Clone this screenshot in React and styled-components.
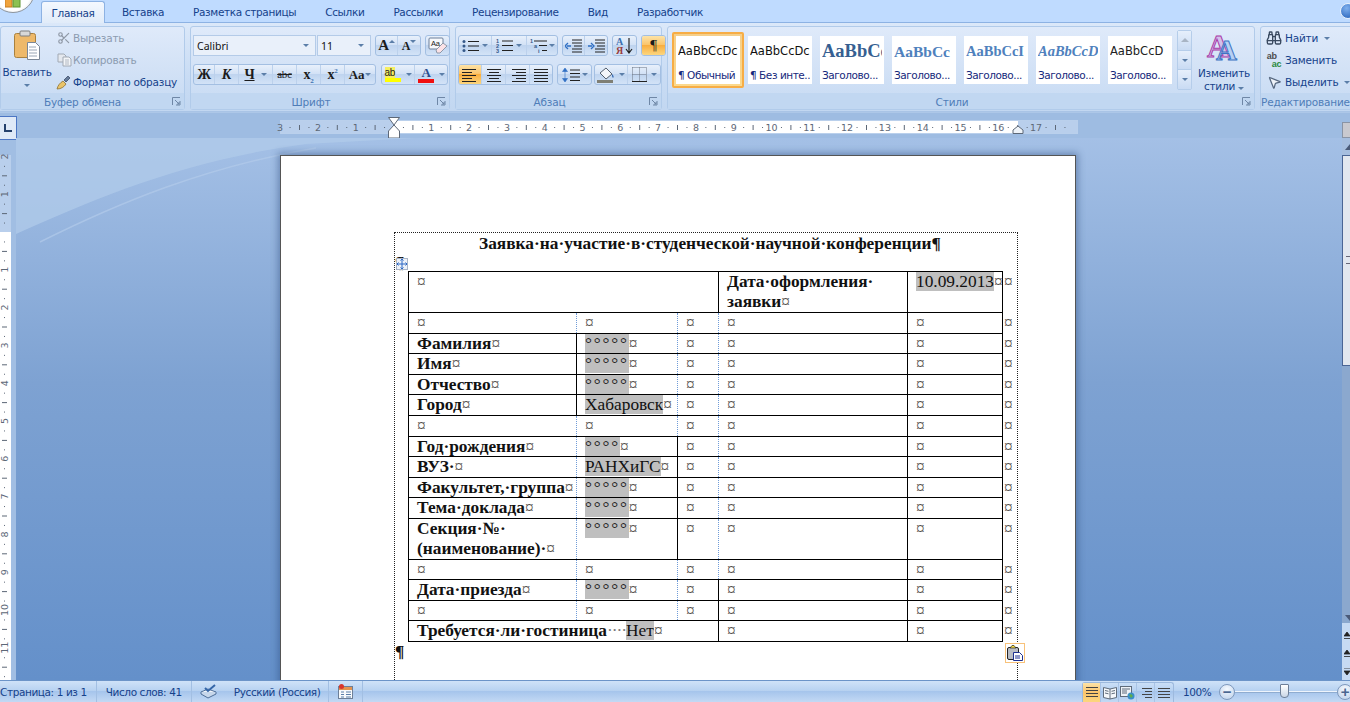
import React from 'react';
import styled, { createGlobalStyle } from 'styled-components';
import { Scissors, Binoculars, MousePointer2 } from 'lucide-react';

const GlobalStyle = createGlobalStyle`
  html, body { margin: 0; padding: 0; overflow: hidden; }
  * { box-sizing: border-box; }
`;

const uiFont = `"DejaVu Sans", "Noto Sans", sans-serif`;
const docFont = `"Liberation Serif", "Times New Roman", serif`;
const navy = '#15428b';

const Window = styled.div`
  position: relative;
  width: 1350px;
  height: 702px;
  display: flex;
  flex-direction: column;
  overflow: hidden;
  font-family: ${uiFont};
  font-size: 10.5px;
  letter-spacing: -0.2px;
  color: ${navy};
`;

/* ---------- tabs ---------- */
const TabStrip = styled.div`
  height: 23px;
  flex: none;
  display: flex;
  gap: 5px;
  padding-left: 41px;
  background: #bfdbff;
  border-bottom: 1px solid #8db2e3;
  letter-spacing: -0.35px;
`;
const Tab = styled.div`
  padding: 0 12px;
  height: ${p => (p.$active ? '23px' : '22px')};
  margin-top: 1px;
  line-height: 22px;
  white-space: nowrap;
  ${p => p.$active && `
    width: 64px;
    text-align: center;
    background: linear-gradient(#f4f8fe, #e0ebf9);
    border: 1px solid #8db2e3;
    border-bottom: 0;
    border-radius: 3px 3px 0 0;
    padding: 0;
  `}
`;
const OfficeButton = styled.div`
  position: absolute;
  left: -9px;
  top: -31px;
  width: 44px;
  height: 44px;
  border-radius: 50%;
  background: radial-gradient(circle at 50% 55%, #fff 55%, #cfd6de 80%, #a6adb5 100%);
  border: 1px solid #8e959d;
  overflow: hidden;
`;
const OfficeMark = styled.svg`
  position: absolute;
  left: 13px;
  top: 28px;
`;
const HelpBadge = styled.div`
  position: absolute;
  right: -6px;
  top: 3px;
  width: 16px;
  height: 16px;
  border-radius: 50%;
  background: radial-gradient(circle at 40% 30%, #7fb0ee, #1d5bb5);
  border: 1px solid #e8f0fa;
`;

/* ---------- ribbon ---------- */
const Ribbon = styled.div`
  height: 89px;
  flex: none;
  display: flex;
  gap: 5px;
  padding: 3px 0 1px;
  background: linear-gradient(#dbe8f9, #c9dcf4 60%, #c2d7f1);
  border-bottom: 1px solid #a9c4e6;
`;
const Group = styled.div`
  position: relative;
  flex: none;
  width: ${p => p.$w}px;
  display: flex;
  flex-direction: column;
  border: 1px solid #b1cbea;
  border-radius: 3px;
  background: linear-gradient(#dfeafa, #d3e2f6 50%, #c6daf3);
`;
const GroupBody = styled.div`
  flex: 1;
  min-height: 0;
  display: flex;
  padding: ${p => p.$pad || '0'};
`;
const GroupCaption = styled.div`
  height: 16px;
  flex: none;
  background: #c1d7f1;
  color: #4f7db8;
  text-align: ${p => p.$align || 'center'};
  line-height: 18px;
  white-space: nowrap;
  padding-right: ${p => p.$shift || 0}px;
`;
const Launcher = styled.svg`
  position: absolute;
  right: 3px;
  bottom: 3px;
`;
const Stack = styled.div`
  display: flex;
  flex-direction: column;
  gap: ${p => p.$gap || 0}px;
  margin-left: ${p => p.$ml || 0}px;
`;
const Row = styled.div`
  display: flex;
  gap: ${p => p.$gap || 4}px;
  height: 21px;
`;
const BigButton = styled.div`
  width: ${p => p.$w}px;
  margin-left: ${p => p.$ml || 0}px;
  flex: none;
  display: flex;
  flex-direction: column;
  align-items: center;
  line-height: 13px;
  text-align: center;
`;
const PasteSlot = styled.div`
  width: 27px;
  height: 31px;
  margin-top: 3px;
`;
const PasteLabel = styled.span`
  margin-top: 5px;
`;
const PasteCaret = styled.i`
  width: 0;
  height: 0;
  margin-top: 5px;
  border-left: 3px solid transparent;
  border-right: 3px solid transparent;
  border-top: 3px solid #5b7ea8;
`;
const SmallAction = styled.div`
  height: 22px;
  flex: none;
  display: flex;
  align-items: center;
  gap: ${p => p.$gap ?? 3}px;
  white-space: nowrap;
  color: ${p => (p.$off ? '#8c9bb0' : navy)};
`;
const IconSlot = styled.span`
  width: 16px;
  height: 16px;
  flex: none;
  display: inline-flex;
  align-items: center;
  justify-content: center;
`;
const Caret = styled.i`
  display: inline-block;
  flex: none;
  width: 0;
  height: 0;
  margin-left: ${p => p.$ml ?? 3}px;
  margin-bottom: ${p => p.$lift || 0}px;
  border-left: 3px solid transparent;
  border-right: 3px solid transparent;
  border-top: 3px solid #5b7ea8;
  ${p => p.$up && 'transform: rotate(180deg);'}
`;
const Combo = styled.div`
  width: ${p => p.$w}px;
  height: 21px;
  flex: none;
  display: flex;
  align-items: center;
  justify-content: space-between;
  padding: 0 6px 0 3px;
  background: #e9f0fa;
  border: 1px solid #b4cbe8;
  color: #111;
  font-family: "Noto Sans", sans-serif;
  letter-spacing: 0;
`;
const ComboPair = styled.div`
  display: flex;
  gap: 1px;
`;
const ButtonSet = styled.div`
  display: flex;
  height: 21px;
  flex: none;
  margin-left: ${p => p.$ml || 0}px;
  border: 1px solid #a3bfe2;
  border-radius: 3px;
  overflow: hidden;
  background: linear-gradient(#e8f0fb, #d3e2f6 45%, #bfd4ef 50%, #d3e3f7);
`;
const ToolButton = styled.div`
  width: ${p => p.$w}px;
  height: 100%;
  flex: none;
  display: flex;
  align-items: center;
  justify-content: center;
  color: #222;
  border-right: 1px solid #bcd1ec;
  &:last-child { border-right: 0; }
  ${p => p.$on && 'background: linear-gradient(#fde3a7, #fbc56c 45%, #f9ae3f 50%, #fcd67e);'}
`;
const Glyph = styled.span`
  font-family: ${docFont};
  font-size: ${p => p.$size || 14}px;
  font-weight: ${p => p.$weight || 700};
  font-style: ${p => (p.$italic ? 'italic' : 'normal')};
  text-decoration: ${p => p.$deco || 'none'};
  color: ${p => p.$color || '#1c1c1c'};
  line-height: 1;
  sub, sup { font-size: 7px; line-height: 0; color: #3b6fb0; }
`;
const ColorBar = styled.span`
  display: flex;
  flex-direction: column;
  align-items: center;
  width: 17px;
  line-height: 11px;
  &::after {
    content: '';
    width: 16px;
    height: 4px;
    background: ${p => p.$color};
  }
`;
const MarkerText = styled.span`
  font-family: "Liberation Sans", sans-serif;
  font-size: 10px;
  color: #222;
  background: #f5ee60;
  line-height: 11px;
  align-self: flex-start;
`;

/* styles gallery */
const Gallery = styled.div`
  display: flex;
  margin: 5px 0 0 4px;
`;
const StyleItem = styled.div`
  width: 72px;
  height: 56px;
  flex: none;
  padding: 2px;
  border: 2px solid ${p => (p.$on ? '#f7ad45' : 'transparent')};
  border-radius: 2px;
  ${p => p.$on && 'background: linear-gradient(#f5cf8a, #fbd98d);'}
`;
const StyleFace = styled.div`
  height: 100%;
  background: #fff;
  overflow: hidden;
  white-space: nowrap;
  color: #111;
  padding: 0 2px;
`;
const StyleSample = styled.div`
  height: 31px;
  line-height: 31px;
  font-family: ${p => (p.$serif ? docFont : uiFont)};
  font-size: ${p => p.$size}px;
  font-weight: ${p => (p.$bold ? 700 : 400)};
  font-style: ${p => (p.$italic ? 'italic' : 'normal')};
  color: ${p => p.$color || '#111'};
  letter-spacing: 0;
  overflow: hidden;
`;
const StyleName = styled.div`
  height: 16px;
  line-height: 16px;
  color: #15287b;
  letter-spacing: -0.45px;
  overflow: hidden;
`;
const GalleryScroll = styled.div`
  width: 15px;
  margin: 3px 0 0 1px;
  flex: none;
  display: flex;
  flex-direction: column;
  height: 60px;
  border: 1px solid #b5cdea;
  border-radius: 2px;
`;
const ScrollStep = styled.div`
  flex: 1;
  display: flex;
  align-items: center;
  justify-content: center;
  background: linear-gradient(#e6effb, #c9dbf3);
  border-bottom: 1px solid #b5cdea;
  &:last-child { border-bottom: 0; }
`;
const UpCaret = styled.i`
  width: 0;
  height: 0;
  border-left: 4px solid transparent;
  border-right: 4px solid transparent;
  border-bottom: 4px solid #a8b4c4;
`;
const Letters = styled.div`
  position: relative;
  width: 34px;
  height: 32px;
  margin: 3px 0 6px;
`;
const BigLetter = styled.span`
  position: absolute;
  left: ${p => p.$x}px;
  top: ${p => p.$y}px;
  font-family: ${docFont};
  font-size: ${p => p.$size}px;
  font-weight: 700;
  line-height: 1;
  color: ${p => p.$fill};
  -webkit-text-stroke: 1px ${p => p.$stroke};
`;
const ReplaceMark = styled.span`
  font-family: "Liberation Sans", sans-serif;
  font-size: 9px;
  font-weight: 700;
  line-height: 8px;
  color: #4c4c4c;
  display: block;
  b { color: #2b8a3e; display: block; padding-left: 5px; }
`;

/* ---------- rulers ---------- */
const RulerRow = styled.div`
  position: relative;
  height: 26px;
  flex: none;
  display: flex;
  background: #9ebce2;
  border-top: 1px solid #adc7e8;
`;
const CornerTab = styled.div`
  width: 17px;
  height: 24px;
  margin-top: 3px;
  background: #dfe9f7;
  border: 1px solid #4c76c4;
  border-left: 0;
  display: flex;
  align-items: center;
  justify-content: center;
  &::after {
    content: '';
    width: 6px;
    height: 6px;
    border-left: 2px solid #24406c;
    border-bottom: 2px solid #24406c;
  }
`;
const HRuler = styled.div`
  position: relative;
  width: 798px;
  height: 14px;
  margin: 7px 0 0 263px;
  background: linear-gradient(to right, #b9cfec 113px, #fff 113px, #fff 737px, #b9cfec 737px);
  border: 1px solid #bad0ec;
`;
const RulerDrawing = styled.svg`
  display: block;
  overflow: visible;
  font-family: ${uiFont};
  font-size: 9.5px;
  letter-spacing: 0;
`;
const Marker = styled.svg`
  position: absolute;
  left: ${p => p.$x}px;
  top: ${p => p.$y}px;
`;
const ViewRuler = styled.div`
  width: 8px;
  height: 16px;
  margin: 9px 0 0 auto;
  background: #c9c9cf;
  border: 1px solid #8a94a5;
  border-right: 0;
`;

/* ---------- workspace ---------- */
const Workspace = styled.div`
  flex: 1;
  min-height: 0;
  display: flex;
`;
const VRulerColumn = styled.div`
  width: 16px;
  flex: none;
  padding-top: 17px;
  background: #a1bee3;
`;
const VRuler = styled.div`
  width: 11px;
  height: 525px;
  background: linear-gradient(#b9cfec 77px, #fff 77px);
`;
const Canvas = styled.div`
  position: relative;
  flex: 1;
  min-width: 0;
  overflow: hidden;
  padding: 17px 0 0 264px;
  background: linear-gradient(#a4c0e6 0, #7ea2d2 45%, #6490ca 100%);
`;
const Swoosh = styled.svg`
  position: absolute;
  left: 0;
  top: 0;
`;
const Page = styled.div`
  position: relative;
  width: 796px;
  height: 560px;
  padding: 77px 0 0 114px;
  background: #fff;
  border: 1px solid #555;
  box-shadow: 0 0 7px 2px rgba(40, 70, 120, 0.45);
`;
const TextArea = styled.div`
  position: relative;
  width: 624px;
  height: 460px;
  border: 1px dotted #222;
  border-bottom: 0;
  margin: -1px 0 0 -1px;
  font-family: ${docFont};
  font-size: 17.33px;
  line-height: 20px;
  letter-spacing: 0;
  color: #111;
`;
const Title = styled.div`
  height: 38px;
  padding: 1px 0 0 8px;
  text-align: center;
  font-weight: 700;
  white-space: nowrap;
`;
const HiddenPilcrow = styled.span`
  position: absolute;
  left: 0;
  top: 20px;
  font-weight: 700;
`;
const MoveHandle = styled.div`
  position: absolute;
  left: 1px;
  top: 25px;
  width: 12px;
  height: 12px;
  background: #eef2f8;
  border: 1px solid #a9b4c6;
  display: flex;
  align-items: center;
  justify-content: center;
`;
const Form = styled.table`
  table-layout: fixed;
  width: 608px;
  margin-left: 13px;
  border-collapse: collapse;
`;
const FormRow = styled.tr`
  height: ${p => p.$h}px;
`;
const Cell = styled.td`
  padding: 0 0 0 8px;
  vertical-align: top;
  white-space: nowrap;
  line-height: ${p => (p.$tall ? 20 : 19)}px;
  border-top: 1px solid #000;
  border-bottom: 1px solid #000;
  border-left: 1px ${p => p.$line || 'solid'} ${p => (p.$line === 'dotted' ? '#6f9bd8' : '#000')};
`;
const EndCell = styled.td`
  padding: 0 0 0 1px;
  vertical-align: top;
  border-left: 1px solid #000;
  line-height: 19px;
`;
const Label = styled.span`
  font-weight: 700;
`;
const Mark = styled.span`
  font-weight: 400;
  color: #56524e;
`;
const Shade = styled.span`
  display: inline-block;
  height: 19px;
  line-height: 19px;
  vertical-align: top;
  background: #bfbfbf;
`;
const Dots = styled.span`
  letter-spacing: ${p => p.$space}px;
  color: #222;
`;
const Leader = styled.span`
  color: #777;
  letter-spacing: -1px;
`;
const Pilcrow = styled.div`
  font-weight: 700;
  height: 20px;
`;
const PasteTag = styled.div`
  position: absolute;
  left: 610px;
  top: 410px;
  width: 20px;
  height: 20px;
  background: #fff;
  border: 1px solid #f8c27a;
  display: flex;
  align-items: center;
  justify-content: center;
`;

/* scroll column */
const ScrollColumn = styled.div`
  width: 8px;
  flex: none;
  display: flex;
  flex-direction: column;
  background: #8ba8ce;
`;
const ScrollArrow = styled.div`
  height: 17px;
  flex: none;
  padding: 6px 0 0 3px;
  background: #a6bedf;
  &::after {
    content: '';
    display: block;
    width: 0;
    height: 0;
    border-left: 5px solid transparent;
    border-right: 5px solid transparent;
    border-bottom: 6px solid #4a5a78;
  }
`;
const Thumb = styled.div`
  height: 211px;
  flex: none;
  padding-top: 100px;
  background: #e2e7ef;
  border: 1px solid #4a6595;
  border-right: 0;
  &::after {
    content: '';
    display: block;
    height: 6px;
    margin-left: 3px;
    border-top: 1px solid #667;
    border-bottom: 1px solid #667;
  }
`;
const ScrollTrack = styled.div`
  flex: 1;
  display: flex;
  align-items: flex-end;
  padding: 0 0 2px 3px;
  &::after {
    content: '';
    width: 0;
    height: 0;
    border-left: 5px solid transparent;
    border-right: 5px solid transparent;
    border-top: 6px solid #4a5a78;
  }
`;
const ScrollNav = styled.div`
  height: 57px;
  flex: none;
  background: #c6daf3;
  display: flex;
  flex-direction: column;
  justify-content: space-around;
  padding: 4px 0 0 2px;
`;

/* ---------- status bar ---------- */
const StatusBar = styled.div`
  height: 22px;
  flex: none;
  display: flex;
  align-items: center;
  background: linear-gradient(#cfe2f8, #b8d2f1 45%, #a6c5ec 50%, #c3d9f4);
  border-top: 1px solid #6c94c8;
  color: #15428b;
  white-space: nowrap;
  letter-spacing: -0.4px;
`;
const StatusItem = styled.div`
  height: 100%;
  display: flex;
  align-items: center;
  padding: ${p => p.$pad || '0 9px'};
  border-right: 1px solid #a2bfe3;
`;
const LanguageName = styled.span`
  margin-left: 16px;
`;
const ViewSet = styled.div`
  height: 20px;
  margin: 1px 0 0 auto;
  display: flex;
  border: 1px solid #9db9dd;
  border-bottom: 0;
  border-radius: 3px 3px 0 0;
`;
const ViewButton = styled.div`
  width: 18px;
  display: flex;
  align-items: center;
  justify-content: center;
  border-right: 1px solid #a9c4e6;
  &:last-child { border-right: 0; }
  ${p => p.$on && 'background: linear-gradient(#fde3a7, #fbc56c 50%, #fcd67e);'}
`;
const ZoomValue = styled.div`
  width: 36px;
  margin-left: 9px;
`;
const ZoomRound = styled.div`
  width: 16px;
  height: 16px;
  flex: none;
  margin-right: ${p => p.$mr || 0}px;
  border-radius: 50%;
  border: 1px solid #7f99bd;
  background: radial-gradient(circle at 50% 30%, #f5f9fe, #bcd0ea);
  display: flex;
  align-items: center;
  justify-content: center;
  font-family: "Liberation Sans", sans-serif;
  font-size: 15px;
  font-weight: 700;
  line-height: 1;
  color: #4a6690;
`;
const ZoomTrack = styled.div`
  position: relative;
  width: 102px;
  height: 2px;
  background: #eef4fc;
  border-bottom: 1px solid #8facd0;
`;
const ZoomThumb = styled.div`
  position: absolute;
  left: 45px;
  top: -7px;
  width: 9px;
  height: 14px;
  background: linear-gradient(#fff, #c9d6e6);
  border: 1px solid #6d7f98;
  border-radius: 1px 1px 4px 4px;
`;

/* ---------- drawings ---------- */
const Lines = ({ rows, w = 16, h = 14, color = '#222' }) => (
  <svg width={w} height={h} viewBox={`0 0 ${w} ${h}`}>
    {rows.map(([a, b, y], i) => (
      <rect key={i} x={a} y={y} width={b - a} height="1" fill={color} />
    ))}
  </svg>
);

const PasteIcon = () => (
  <svg width="27" height="31" viewBox="0 0 27 31">
    <rect x="0.5" y="3.5" width="21" height="24" rx="2" fill="#eeb96a" stroke="#a9813f" />
    <rect x="6" y="1" width="10" height="5" rx="1" fill="#d8d8d8" stroke="#7e7e7e" />
    <path d="M13.5 12.5h8l4 4v13h-12z" fill="#fff" stroke="#7a8797" />
    <path d="M15 17h7M15 20h8M15 23h8M15 26h8" stroke="#9aa6b5" />
  </svg>
);
const CopyIcon = () => (
  <svg width="15" height="14" viewBox="0 0 15 14">
    <path d="M1 1h6l2 2v6H1z" fill="#e4e8ee" stroke="#a1a9b4" />
    <path d="M6 4h6l2 2v7H6z" fill="#f2f4f7" stroke="#a1a9b4" />
    <path d="M8 7h4M8 9h4M8 11h4" stroke="#b1b8c2" />
  </svg>
);
const BrushIcon = () => (
  <svg width="16" height="16" viewBox="0 0 16 16">
    <path d="M1 15c1-4 3-6 6-8l3 3c-2 3-5 5-9 5z" fill="#e9c46a" stroke="#8d7134" strokeWidth=".8" />
    <path d="M8 6l4-4 2 2-4 4z" fill="#667b9a" stroke="#3f4f68" strokeWidth=".8" />
  </svg>
);
const ClearIcon = () => (
  <svg width="20" height="17" viewBox="0 0 20 17">
    <rect x="1" y="1" width="14" height="11" rx="1" fill="#f7f9fc" stroke="#6d7f98" />
    <text x="3" y="9" fontFamily="Liberation Sans" fontSize="7.5" fill="#222">Aa</text>
    <path d="M8 13l7-7 4 3-7 7H9z" fill="#fbe2e6" stroke="#8d98a8" />
  </svg>
);
const BulletIcon = () => (
  <svg width="18" height="14" viewBox="0 0 18 14">
    <g fill="#35598a"><circle cx="2" cy="2.5" r="1.5" /><circle cx="2" cy="7" r="1.5" /><circle cx="2" cy="11.5" r="1.5" /></g>
    <path d="M6 2.5h11M6 7h11M6 11.5h11" stroke="#222" />
  </svg>
);
const NumberIcon = () => (
  <svg width="18" height="15" viewBox="0 0 18 15">
    <g fontFamily="Liberation Sans" fontSize="5.5" fontWeight="700" fill="#35598a">
      <text x="0" y="5">1</text><text x="0" y="10">2</text><text x="0" y="15">3</text>
    </g>
    <path d="M6 3h11M6 7.5h11M6 12.5h11" stroke="#222" />
  </svg>
);
const MultiIcon = () => (
  <svg width="18" height="15" viewBox="0 0 18 15">
    <g fontFamily="Liberation Sans" fontSize="5.5" fontWeight="700" fill="#35598a">
      <text x="0" y="5">1</text><text x="4" y="10">a</text><text x="8" y="15">i</text>
    </g>
    <path d="M4 3h13M9 7.5h8M12 12.5h5" stroke="#222" />
  </svg>
);
const IndentIcon = ({ flip }) => (
  <svg width="17" height="14" viewBox="0 0 17 14">
    <path d="M7 1h10M7 4h10M9 7h8M7 10h10M7 13h10" stroke="#222" />
    <path d={flip ? 'M0 7h4M3 4l3 3-3 3' : 'M6 7H2M3 4L0 7l3 3'} stroke="#2f6fc4" strokeWidth="1.3" fill="none" />
  </svg>
);
const SortIcon = () => (
  <svg width="18" height="17" viewBox="0 0 18 17">
    <text x="0" y="8" fontFamily="Liberation Serif" fontSize="10" fontWeight="700" fill="#3b6fb0">A</text>
    <text x="0" y="16.5" fontFamily="Liberation Serif" fontSize="10" fontWeight="700" fill="#9b3d3d">Я</text>
    <path d="M13 1v14M10 12l3 4 3-4" stroke="#222" fill="none" strokeWidth="1.2" />
  </svg>
);
const SpacingIcon = () => (
  <svg width="18" height="16" viewBox="0 0 18 16">
    <path d="M3 1L0.5 4.5h5zM3 15L0.5 11.5h5zM3 4v8" fill="#2f6fc4" stroke="#2f6fc4" strokeWidth=".6" />
    <path d="M8 3h10M8 6.5h10M8 10h10M8 13.5h10" stroke="#222" />
  </svg>
);
const BucketIcon = () => (
  <svg width="18" height="17" viewBox="0 0 18 17">
    <path d="M3 7l6-5 6 6-6 5z" fill="#f4f6fa" stroke="#54606f" />
    <path d="M15 8c2 2 2 3 1 4-1-1-1-2-1-4z" fill="#3a6db5" />
    <rect x="0" y="14" width="16" height="3" fill="#7f7f74" />
  </svg>
);
const BorderIcon = () => (
  <svg width="15" height="15" viewBox="0 0 15 15">
    <path d="M.5.5h14v14M.5.5v14M7.5 .5v14M.5 7.5h14" stroke="#6a7380" strokeDasharray="1 1" fill="none" />
    <path d="M0 14.5h15" stroke="#222" />
  </svg>
);
const MoveIcon = () => (
  <svg width="10" height="10" viewBox="0 0 10 10">
    <path d="M5 0v10M0 5h10M3.5 1.5L5 0l1.500 1.500M3.500 8.500L5 10l1.500-1.500M1.500 3.500L0 5l1.500 1.500M8.500 3.500L10 5 8.500 6.500" stroke="#2b67c4" fill="none" />
  </svg>
);
const PasteTagIcon = () => (
  <svg width="16" height="16" viewBox="0 0 16 16">
    <rect x="0.5" y="2.500" width="11" height="12" rx="1.500" fill="#b9bcc3" stroke="#222" />
    <path d="M3 3l2-2.500h2L9 3z" fill="#f6dc3f" stroke="#222" strokeWidth=".7" />
    <path d="M6.500 7.500h6l3 3v5h-9z" fill="#fff" stroke="#1d2f8f" />
    <path d="M8 11h5M8 13h5" stroke="#1d2f8f" />
  </svg>
);
const LaunchMark = () => (
  <Launcher width="9" height="9" viewBox="0 0 9 9">
    <path d="M.5 8V.5H8M8 4v4H4" stroke="#6f87a6" fill="none" />
    <path d="M3 3l4 4M5 7h2V5" stroke="#6f87a6" fill="none" />
  </Launcher>
);
const SpellIcon = () => (
  <svg width="18" height="15" viewBox="0 0 18 15">
    <path d="M1 8l7-3 8 3-8 4z" fill="#f2f6fb" stroke="#4f6f99" />
    <path d="M1 8v2l7 4 8-4V8" fill="#c7d7eb" stroke="#4f6f99" />
    <path d="M5 4l3 3 7-6" stroke="#3566a8" strokeWidth="2" fill="none" />
  </svg>
);
const MacroIcon = () => (
  <svg width="15" height="15" viewBox="0 0 15 15">
    <rect x="0.5" y="2.500" width="14" height="12" fill="#f8fafc" stroke="#6d7f98" />
    <rect x="1" y="3" width="13" height="3" fill="#e4934e" />
    <path d="M3 8h3M8 8h5M3 10.500h3M8 10.500h5M3 13h3M8 13h5" stroke="#5b7ea8" />
    <circle cx="3.500" cy="2.500" r="2.500" fill="#d8352c" />
  </svg>
);
const ReadIcon = () => (
  <svg width="14" height="14" viewBox="0 0 14 14">
    <path d="M.5 1.500L7 3l6.500-1.500v10L7 13 .5 11.500zM7 3v10" fill="#f4f7fb" stroke="#5f6b7a" />
    <path d="M2 4.500l3.500.8M2 7l3.500.8M8.500 5.300L12 4.500M8.500 7.800L12 7" stroke="#5f6b7a" />
  </svg>
);
const WebIcon = () => (
  <svg width="15" height="14" viewBox="0 0 15 14">
    <rect x="0.5" y="0.500" width="11" height="10" fill="#eef2f7" stroke="#5f6b7a" />
    <path d="M2 3h8M2 5h5M2 7h5" stroke="#5f6b7a" />
    <circle cx="11" cy="10" r="3.500" fill="#3a8fc8" />
    <path d="M9 9l2-1 2 2-2 2z" fill="#5fae4a" />
  </svg>
);
const PrevNextIcon = ({ down }) => (
  <svg width="6" height="7" viewBox="0 0 6 7">
    <path d={down ? 'M0 0h6M0 3h6L3 7z' : 'M3 0l3 4H0zM0 6.500h6'} stroke="#222" fill="#222" strokeWidth=".8" />
  </svg>
);

const HorizontalMarks = () => {
  const origin = 112.5;
  const cm = 37.8;
  const parts = [];
  for (let q = -12; q <= 71; q++) {
    const x = origin + (q * cm) / 4;
    if (q === 0) continue;
    if (q % 4 === 0) {
      parts.push(<text key={q} x={x} y="10" textAnchor="middle" fill="#5d6877">{Math.abs(q / 4)}</text>);
    } else if (q % 2 === 0) {
      parts.push(<rect key={q} x={x} y="4" width="1" height="5" fill="#5d6877" />);
    } else {
      parts.push(<rect key={q} x={x} y="6" width="1" height="1" fill="#5d6877" />);
    }
  }
  return <RulerDrawing width="796" height="12">{parts}</RulerDrawing>;
};

const VerticalMarks = () => {
  const origin = 77;
  const cm = 37.8;
  const parts = [];
  for (let q = -8; q <= 48; q++) {
    const y = origin + (q * cm) / 4;
    if (q === 0) continue;
    if (q % 4 === 0) {
      parts.push(
        <text key={q} transform={`translate(8 ${y}) rotate(-90)`} textAnchor="middle" fill="#5d6877">{Math.abs(q / 4)}</text>
      );
    } else if (q % 2 === 0) {
      parts.push(<rect key={q} x="2" y={y} width="5" height="1" fill="#5d6877" />);
    } else {
      parts.push(<rect key={q} x="4" y={y} width="1" height="1" fill="#5d6877" />);
    }
  }
  return <RulerDrawing width="11" height="525">{parts}</RulerDrawing>;
};

/* ---------- data ---------- */
const tabs = ['Главная', 'Вставка', 'Разметка страницы', 'Ссылки', 'Рассылки', 'Рецензирование', 'Вид', 'Разработчик'];

const galleryItems = [
  { sample: 'AaBbCcDc', name: '¶ Обычный', size: 11.5, on: true },
  { sample: 'AaBbCcDc', name: '¶ Без инте...', size: 11.5 },
  { sample: 'AaBbCc', name: 'Заголово...', size: 18.5, serif: true, bold: true, color: '#365f91' },
  { sample: 'AaBbCc', name: 'Заголово...', size: 15.5, serif: true, bold: true, color: '#4f81bd' },
  { sample: 'AaBbCcI', name: 'Заголово...', size: 14.5, serif: true, bold: true, color: '#4f81bd' },
  { sample: 'AaBbCcD', name: 'Заголово...', size: 14.5, serif: true, bold: true, italic: true, color: '#4f81bd' },
  { sample: 'AaBbCcD', name: 'Заголово...', size: 11.5, color: '#222' },
];

const d = 'dotted';
const s = 'solid';
const five = <Dots $space={1.8}>°°°°°</Dots>;
const four = <Dots $space={1.8}>°°°°</Dots>;

const formRows = [
  { h: 21, lines: [d, d, d] },
  { h: 20, label: 'Фамилия', value: five, lines: [s, d, d] },
  { h: 21, label: 'Имя', value: five, lines: [s, d, d] },
  { h: 20, label: 'Отчество', value: five, lines: [s, d, d] },
  { h: 21, label: 'Город', value: 'Хабаровск', lines: [s, d, d] },
  { h: 21, lines: [d, d, d] },
  { h: 20, label: 'Год·рождения', value: four, lines: [d, s, d] },
  { h: 21, label: 'ВУЗ·', value: 'РАНХиГС', lines: [d, s, d] },
  { h: 20, label: 'Факультет,·группа', value: five, lines: [d, s, d] },
  { h: 21, label: 'Тема·доклада', value: five, lines: [d, s, d] },
  { h: 41, label: <>Секция·№·<br />(наименование)·</>, value: five, lines: [d, s, d], tall: true },
  { h: 20, lines: [d, d, d] },
  { h: 21, label: 'Дата·приезда', value: five, lines: [d, d, s] },
  { h: 20, lines: [d, d, s] },
];

const End = () => <Mark>¤</Mark>;

const App = () => (
  <>
    <GlobalStyle />
    <Window>
      <TabStrip>
        {tabs.map((t, i) => <Tab key={t} $active={i === 0}>{t}</Tab>)}
      </TabStrip>
      <OfficeButton>
        <OfficeMark width="16" height="10" viewBox="0 0 16 10">
          <rect x="0" y="0" width="7" height="9" fill="#f0a33c" stroke="#c77d22" />
          <rect x="8" y="0" width="7" height="9" fill="#8cc152" stroke="#5f9430" />
        </OfficeMark>
      </OfficeButton>
      <HelpBadge />

      <Ribbon>
        <Group $w={185}>
          <GroupBody>
            <BigButton $w={52}>
              <PasteSlot><PasteIcon /></PasteSlot>
              <PasteLabel>Вставить</PasteLabel>
              <PasteCaret />
            </BigButton>
            <Stack $ml={3}>
              <SmallAction $off $gap={1}><IconSlot><Scissors size={14} color="#8f98a5" /></IconSlot>Вырезать</SmallAction>
              <SmallAction $off $gap={1}><IconSlot><CopyIcon /></IconSlot>Копировать</SmallAction>
              <SmallAction $gap={1}><IconSlot><BrushIcon /></IconSlot>Формат по образцу</SmallAction>
            </Stack>
          </GroupBody>
          <GroupCaption $shift={20}>Буфер обмена</GroupCaption>
          <LaunchMark />
        </Group>

        <Group $w={260}>
          <GroupBody $pad="8px 0 0 2px">
            <Stack $gap={8}>
              <Row>
                <ComboPair>
                  <Combo $w={123}>Calibri<Caret /></Combo>
                  <Combo $w={54}>11<Caret /></Combo>
                </ComboPair>
                <ButtonSet>
                  <ToolButton $w={22}><Glyph $size={15}>A</Glyph><Caret $ml={0} $up $lift={8} /></ToolButton>
                  <ToolButton $w={22}><Glyph $size={12}>A</Glyph><Caret $ml={0} $lift={8} /></ToolButton>
                </ButtonSet>
                <ButtonSet><ToolButton $w={23}><ClearIcon /></ToolButton></ButtonSet>
              </Row>
              <Row $gap={5}>
                <ButtonSet>
                  <ToolButton $w={21}><Glyph>Ж</Glyph></ToolButton>
                  <ToolButton $w={24}><Glyph $italic>К</Glyph></ToolButton>
                  <ToolButton $w={34}><Glyph $deco="underline">Ч</Glyph><Caret $ml={6} /></ToolButton>
                  <ToolButton $w={24}><Glyph $size={11} $weight={400} $deco="line-through">abc</Glyph></ToolButton>
                  <ToolButton $w={24}><Glyph>x<sub>2</sub></Glyph></ToolButton>
                  <ToolButton $w={24}><Glyph>x<sup>2</sup></Glyph></ToolButton>
                  <ToolButton $w={30}><Glyph $size={13}>Aa</Glyph><Caret $ml={1} /></ToolButton>
                </ButtonSet>
                <ButtonSet>
                  <ToolButton $w={33}><ColorBar $color="#ffff00"><MarkerText>ab</MarkerText></ColorBar><Caret $ml={4} /></ToolButton>
                  <ToolButton $w={32}><ColorBar $color="#f01010"><Glyph $size={13} $color="#2a4d8f">A</Glyph></ColorBar><Caret $ml={4} /></ToolButton>
                </ButtonSet>
              </Row>
            </Stack>
          </GroupBody>
          <GroupCaption $shift={18}>Шрифт</GroupCaption>
          <LaunchMark />
        </Group>

        <Group $w={207}>
          <GroupBody $pad="8px 0 0 2px">
            <Stack $gap={8}>
              <Row>
                <ButtonSet>
                  <ToolButton $w={33}><BulletIcon /><Caret $ml={2} /></ToolButton>
                  <ToolButton $w={35}><NumberIcon /><Caret $ml={2} /></ToolButton>
                  <ToolButton $w={30}><MultiIcon /><Caret $ml={1} /></ToolButton>
                </ButtonSet>
                <ButtonSet>
                  <ToolButton $w={22}><IndentIcon /></ToolButton>
                  <ToolButton $w={22}><IndentIcon flip /></ToolButton>
                </ButtonSet>
                <ButtonSet><ToolButton $w={23}><SortIcon /></ToolButton></ButtonSet>
                <ButtonSet><ToolButton $w={23} $on><Glyph $size={15} $weight={400}>¶</Glyph></ToolButton></ButtonSet>
              </Row>
              <Row>
                <ButtonSet>
                  <ToolButton $w={23} $on><Lines rows={[[0, 14, 1], [0, 10, 4], [0, 14, 7], [0, 10, 10], [0, 14, 13]]} /></ToolButton>
                  <ToolButton $w={24}><Lines rows={[[1, 15, 1], [3, 13, 4], [1, 15, 7], [3, 13, 10], [1, 15, 13]]} /></ToolButton>
                  <ToolButton $w={24}><Lines rows={[[2, 16, 1], [6, 16, 4], [2, 16, 7], [6, 16, 10], [2, 16, 13]]} /></ToolButton>
                  <ToolButton $w={22}><Lines rows={[[1, 15, 1], [1, 15, 4], [1, 15, 7], [1, 15, 10], [1, 15, 13]]} /></ToolButton>
                </ButtonSet>
                <ButtonSet><ToolButton $w={33}><SpacingIcon /><Caret $ml={2} /></ToolButton></ButtonSet>
                <ButtonSet $ml={-2}>
                  <ToolButton $w={33}><BucketIcon /><Caret $ml={4} /></ToolButton>
                  <ToolButton $w={32}><BorderIcon /><Caret $ml={4} /></ToolButton>
                </ButtonSet>
              </Row>
            </Stack>
          </GroupBody>
          <GroupCaption $shift={18}>Абзац</GroupCaption>
          <LaunchMark />
        </Group>

        <Group $w={588}>
          <GroupBody>
            <Gallery>
              {galleryItems.map((g, i) => (
                <StyleItem key={i} $on={g.on}>
                  <StyleFace>
                    <StyleSample $size={g.size} $serif={g.serif} $bold={g.bold} $italic={g.italic} $color={g.color}>{g.sample}</StyleSample>
                    <StyleName>{g.name}</StyleName>
                  </StyleFace>
                </StyleItem>
              ))}
            </Gallery>
            <GalleryScroll>
              <ScrollStep><UpCaret /></ScrollStep>
              <ScrollStep><Caret $ml={0} /></ScrollStep>
              <ScrollStep><Caret $ml={0} /></ScrollStep>
            </GalleryScroll>
            <BigButton $w={58} $ml={3}>
              <Letters>
                <BigLetter $x={0} $y={0} $size={32} $fill="rgba(200,120,210,.35)" $stroke="#a83aa8">A</BigLetter>
                <BigLetter $x={9} $y={6} $size={29} $fill="rgba(150,190,240,.5)" $stroke="#3e74c4">A</BigLetter>
              </Letters>
              <span>Изменить</span>
              <span>стили<Caret /></span>
            </BigButton>
          </GroupBody>
          <GroupCaption $shift={18}>Стили</GroupCaption>
          <LaunchMark />
        </Group>

        <Group $w={100}>
          <GroupBody $pad="0 0 0 5px">
            <Stack>
              <SmallAction><IconSlot><Binoculars size={16} color="#3a4a60" /></IconSlot>Найти<Caret /></SmallAction>
              <SmallAction><IconSlot><ReplaceMark>ab<b>ac</b></ReplaceMark></IconSlot>Заменить</SmallAction>
              <SmallAction><IconSlot><MousePointer2 size={15} color="#55677f" fill="#eef3f9" /></IconSlot>Выделить<Caret /></SmallAction>
            </Stack>
          </GroupBody>
          <GroupCaption $align="left">Редактирование</GroupCaption>
        </Group>
      </Ribbon>

      <RulerRow>
        <CornerTab />
        <HRuler>
          <HorizontalMarks />
          <Marker $x={107} $y={-4} width="12" height="22" viewBox="0 0 12 22">
            <path d="M.5.5h11L6 8l5.500 6v7H.5v-7L6 8z" fill="#fff" stroke="#5d6877" />
          </Marker>
          <Marker $x={731} $y={4} width="12" height="9" viewBox="0 0 12 9">
            <path d="M1 8.500V5l5-4 5 4v3.500z" fill="#eef3f9" stroke="#5d6877" />
          </Marker>
        </HRuler>
        <ViewRuler />
      </RulerRow>

      <Workspace>
        <VRulerColumn>
          <VRuler><VerticalMarks /></VRuler>
        </VRulerColumn>
        <Canvas>
          <Swoosh width="400" height="110" viewBox="0 0 400 110">
            <path d="M0 96C80 60 170 22 290 6L400 0H0z" fill="#b0cbea" opacity=".75" />
            <path d="M24 104C100 66 190 28 300 10" stroke="#b2cbea" strokeWidth="1.500" fill="none" opacity=".7" />
          </Swoosh>
          <Page>
            <TextArea>
              <Title>Заявка·на·участие·в·студенческой·научной·конференции¶</Title>
              <HiddenPilcrow>¶</HiddenPilcrow>
              <MoveHandle><MoveIcon /></MoveHandle>
              <Form>
                <colgroup>
                  <col width="168" />
                  <col width="101" />
                  <col width="41" />
                  <col width="189" />
                  <col width="95" />
                  <col width="14" />
                </colgroup>
                <tbody>
                  <FormRow $h={41}>
                    <Cell colSpan={3}><End /></Cell>
                    <Cell $tall><Label>Дата·оформления·<br />заявки</Label><End /></Cell>
                    <Cell><Shade>10.09.2013</Shade><End /></Cell>
                    <EndCell><End /></EndCell>
                  </FormRow>
                  {formRows.map((r, i) => (
                    <FormRow key={i} $h={r.h}>
                      <Cell $tall={r.tall}>{r.label && <Label>{r.label}</Label>}<End /></Cell>
                      <Cell $line={r.lines[0]}>{r.value && <Shade>{r.value}</Shade>}<End /></Cell>
                      <Cell $line={r.lines[1]}><End /></Cell>
                      <Cell $line={r.lines[2]}><End /></Cell>
                      <Cell><End /></Cell>
                      <EndCell><End /></EndCell>
                    </FormRow>
                  ))}
                  <FormRow $h={21}>
                    <Cell colSpan={3}>
                      <Label>Требуется·ли·гостиница</Label><Leader>····</Leader><Shade>Нет</Shade><End />
                    </Cell>
                    <Cell><End /></Cell>
                    <Cell><End /></Cell>
                    <EndCell><End /></EndCell>
                  </FormRow>
                </tbody>
              </Form>
              <Pilcrow>¶</Pilcrow>
              <PasteTag><PasteTagIcon /></PasteTag>
            </TextArea>
          </Page>
        </Canvas>
        <ScrollColumn>
          <ScrollArrow />
          <Thumb />
          <ScrollTrack />
          <ScrollNav>
            <PrevNextIcon />
            <PrevNextIcon />
            <PrevNextIcon down />
          </ScrollNav>
        </ScrollColumn>
      </Workspace>

      <StatusBar>
        <StatusItem $pad="0 9px 0 0">Страница: 1 из 1</StatusItem>
        <StatusItem>Число слов: 41</StatusItem>
        <StatusItem $pad="0 8px"><SpellIcon /><LanguageName>Русский (Россия)</LanguageName></StatusItem>
        <StatusItem><MacroIcon /></StatusItem>
        <ViewSet>
          <ViewButton $on><Lines w={12} h={13} rows={[[0, 12, 1], [0, 12, 4], [0, 12, 7], [0, 12, 10]]} color="#444" /></ViewButton>
          <ViewButton><ReadIcon /></ViewButton>
          <ViewButton><WebIcon /></ViewButton>
          <ViewButton><Lines w={12} h={13} rows={[[2, 12, 2], [5, 12, 5], [2, 12, 8], [5, 12, 11]]} color="#444" /></ViewButton>
          <ViewButton><Lines w={12} h={13} rows={[[0, 12, 2], [0, 12, 5], [0, 12, 8], [0, 12, 11]]} color="#444" /></ViewButton>
        </ViewSet>
        <ZoomValue>100%</ZoomValue>
        <ZoomRound>−</ZoomRound>
        <ZoomTrack><ZoomThumb /></ZoomTrack>
        <ZoomRound $mr={-3}>+</ZoomRound>
      </StatusBar>
    </Window>
  </>
);

export default App;
